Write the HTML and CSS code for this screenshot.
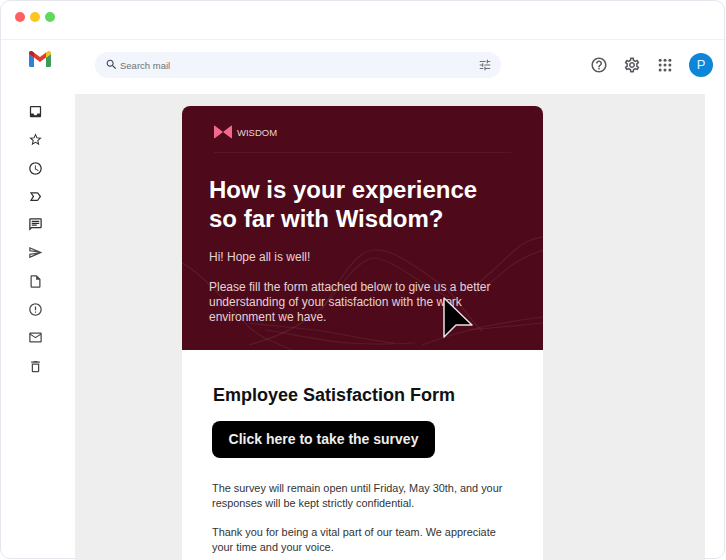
FILE: index.html
```html
<!DOCTYPE html>
<html lang="en">

<head>
    <meta charset="UTF-8">
    <meta name="viewport" content="width=device-width, initial-scale=1.0">
    <title>Wisdom survey email</title>
    <link rel="stylesheet" href="styles.css">
</head>

<body>
    <div class="window">
        <div class="titlebar">
            <span class="dot dot-red"></span>
            <span class="dot dot-yellow"></span>
            <span class="dot dot-green"></span>
        </div>

        <div class="app">
            <!-- Left rail -->
            <aside class="sidebar">
                <svg class="gmail-logo" viewBox="0 0 22 16" width="22" height="16">
                    <path d="M0 3v11.5A1.5 1.5 0 0 0 1.5 16H5V6.5z" fill="#2f80d8"/>
                    <path d="M22 3v11.5a1.5 1.5 0 0 1-1.5 1.5H17V6.5z" fill="#3f9a58"/>
                    <path d="M17 1.5V6.5L22 3V2.2C22 .4 20 -.6 18.6.4z" fill="#f5bd1f"/>
                    <path d="M0 3 5 6.5 11 11 17 6.5V1.5L11 6 3.4.4C2 -.6 0 .4 0 2.2z" fill="#e5382f"/>
                    <path d="M0 3 5 6.5V1.5L3.4.4C2 -.6 0 .4 0 2.2z" fill="#b3262c"/>
                </svg>
                <nav class="rail">
                    <svg class="rail-icon" viewBox="0 0 24 24"><path d="M19 3H4.99c-1.11 0-1.98.89-1.98 2L3 19c0 1.1.88 2 1.99 2H19c1.1 0 2-.9 2-2V5c0-1.11-.9-2-2-2zm0 12h-4c0 1.66-1.35 3-3 3s-3-1.34-3-3H4.99V5H19v10z"/></svg>
                    <svg class="rail-icon" viewBox="0 0 24 24"><path d="M22 9.24l-7.19-.62L12 2 9.19 8.63 2 9.24l5.46 4.73L5.82 21 12 17.27 18.18 21l-1.63-7.03L22 9.24zM12 15.4l-3.76 2.27 1-4.28-3.32-2.88 4.38-.38L12 6.1l1.71 4.04 4.38.38-3.32 2.88 1 4.28L12 15.4z"/></svg>
                    <svg class="rail-icon" viewBox="0 0 24 24"><path d="M11.99 2C6.47 2 2 6.48 2 12s4.47 10 9.99 10C17.52 22 22 17.52 22 12S17.52 2 11.99 2zM12 20c-4.42 0-8-3.58-8-8s3.58-8 8-8 8 3.58 8 8-3.58 8-8 8zm.5-13H11v6l5.25 3.15.75-1.23-4.5-2.67z"/></svg>
                    <svg class="rail-icon" viewBox="0 0 24 24"><path d="M15 19H3l4.5-7L3 5h12c.65 0 1.26.31 1.63.84L21 12l-4.37 6.16c-.37.52-.98.84-1.63.84zm-8.5-2H15l3.5-5L15 7H6.5l3.5 5-3.5 5z"/></svg>
                    <svg class="rail-icon" viewBox="0 0 24 24"><path d="M20 2H4c-1.1 0-2 .9-2 2v18l4-4h14c1.1 0 2-.9 2-2V4c0-1.1-.9-2-2-2zm0 14H5.17L4 17.17V4h16v12zM6 12h8v2H6zm0-3h12v2H6zm0-3h12v2H6z"/></svg>
                    <svg class="rail-icon" viewBox="0 0 24 24"><path d="M4.01 6.03l7.51 3.22-7.52-1 .01-2.22m7.5 8.72L4 17.97v-2.22l7.51-1M2.01 3L2 10l15 2-15 2 .01 7L23 12 2.01 3z"/></svg>
                    <svg class="rail-icon" viewBox="0 0 24 24"><path d="M14 2H6c-1.1 0-1.99.9-1.99 2L4 20c0 1.1.89 2 1.99 2H18c1.1 0 2-.9 2-2V8l-6-6zM6 20V4h7v5h5v11H6z"/></svg>
                    <svg class="rail-icon" viewBox="0 0 24 24"><path d="M11 15h2v2h-2zm0-8h2v6h-2zm.99-5C6.47 2 2 6.48 2 12s4.47 10 9.99 10C17.52 22 22 17.52 22 12S17.52 2 11.99 2zM12 20c-4.42 0-8-3.58-8-8s3.58-8 8-8 8 3.58 8 8-3.58 8-8 8z"/></svg>
                    <svg class="rail-icon" viewBox="0 0 24 24"><path d="M22 6c0-1.1-.9-2-2-2H4c-1.1 0-2 .9-2 2v12c0 1.1.9 2 2 2h16c1.1 0 2-.9 2-2V6zm-2 0l-8 5-8-5h16zm0 12H4V8l8 5 8-5v10z"/></svg>
                    <svg class="rail-icon" viewBox="0 0 24 24"><path d="M16 9v10H8V9h8m-1.5-6h-5l-1 1H5v2h14V4h-3.5l-1-1zM18 7H6v12c0 1.1.9 2 2 2h8c1.1 0 2-.9 2-2V7z"/></svg>
                </nav>
            </aside>

            <div class="content">
                <!-- Search and account row -->
                <header class="topbar">
                    <div class="search">
                        <svg class="search-icon" viewBox="0 0 24 24"><path d="M15.5 14h-.79l-.28-.27C15.41 12.59 16 11.11 16 9.5 16 5.91 13.09 3 9.5 3S3 5.91 3 9.5 5.91 16 9.5 16c1.61 0 3.09-.59 4.23-1.57l.27.28v.79l5 4.99L20.49 19l-4.99-5zm-6 0C7.01 14 5 11.99 5 9.5S7.01 5 9.5 5 14 7.01 14 9.5 11.99 14 9.5 14z"/></svg>
                        <span class="search-text">Search mail</span>
                        <svg class="tune-icon" viewBox="0 0 24 24"><path d="M3 17v2h6v-2H3zM3 5v2h10V5H3zm10 16v-2h8v-2h-8v-2h-2v6h2zM7 9v2H3v2h4v2h2V9H7zm14 4v-2H11v2h10zm-6-4h2V7h4V5h-4V3h-2v6z"/></svg>
                    </div>
                    <div class="top-actions">
                        <svg class="top-icon" viewBox="0 0 24 24"><path d="M11 18h2v-2h-2v2zm1-16C6.48 2 2 6.48 2 12s4.48 10 10 10 10-4.48 10-10S17.52 2 12 2zm0 18c-4.41 0-8-3.59-8-8s3.59-8 8-8 8 3.59 8 8-3.59 8-8 8zm0-14c-2.21 0-4 1.79-4 4h2c0-1.1.9-2 2-2s2 .9 2 2c0 2-3 1.75-3 5h2c0-2.25 3-2.5 3-5 0-2.21-1.79-4-4-4z"/></svg>
                        <svg class="top-icon" viewBox="0 0 24 24"><path d="M19.43 12.98c.04-.32.07-.64.07-.98 0-.34-.03-.66-.07-.98l2.11-1.65c.19-.15.24-.42.12-.64l-2-3.46c-.09-.16-.26-.25-.44-.25-.06 0-.12.01-.17.03l-2.49 1c-.52-.4-1.08-.73-1.69-.98l-.38-2.65C14.46 2.18 14.25 2 14 2h-4c-.25 0-.46.18-.49.42l-.38 2.65c-.61.25-1.17.59-1.69.98l-2.49-1c-.06-.02-.12-.03-.18-.03-.17 0-.34.09-.43.25l-2 3.46c-.13.22-.07.49.12.64l2.11 1.65c-.04.32-.07.65-.07.98 0 .33.03.66.07.98l-2.11 1.65c-.19.15-.24.42-.12.64l2 3.46c.09.16.26.25.44.25.06 0 .12-.01.17-.03l2.49-1c.52.4 1.08.73 1.69.98l.38 2.65c.03.24.24.42.49.42h4c.25 0 .46-.18.49-.42l.38-2.65c.61-.25 1.17-.59 1.69-.98l2.49 1c.06.02.12.03.18.03.17 0 .34-.09.43-.25l2-3.46c.12-.22.07-.49-.12-.64l-2.11-1.65zm-1.98-1.71c.04.31.05.52.05.73 0 .21-.02.43-.05.73l-.14 1.13.89.7 1.08.84-.7 1.21-1.27-.51-1.04-.42-.9.68c-.43.32-.84.56-1.25.73l-1.06.43-.16 1.13-.2 1.35h-1.4l-.19-1.35-.16-1.13-1.06-.43c-.43-.18-.83-.41-1.23-.71l-.91-.7-1.06.43-1.27.51-.7-1.21 1.08-.84.89-.7-.14-1.13c-.03-.31-.05-.54-.05-.74s.02-.43.05-.73l.14-1.13-.89-.7-1.08-.84.7-1.21 1.27.51 1.04.42.9-.68c.43-.32.84-.56 1.25-.73l1.06-.43.16-1.13.2-1.35h1.39l.19 1.35.16 1.13 1.06.43c.43.18.83.41 1.23.71l.91.7 1.06-.43 1.27-.51.7 1.21-1.07.85-.89.7.14 1.13zM12 8c-2.21 0-4 1.79-4 4s1.79 4 4 4 4-1.79 4-4-1.79-4-4-4zm0 6c-1.1 0-2-.9-2-2s.9-2 2-2 2 .9 2 2-.9 2-2 2z"/></svg>
                        <svg class="top-icon" viewBox="0 0 24 24">
                            <circle cx="5.5" cy="5.5" r="2"/><circle cx="12" cy="5.5" r="2"/><circle cx="18.5" cy="5.5" r="2"/>
                            <circle cx="5.5" cy="12" r="2"/><circle cx="12" cy="12" r="2"/><circle cx="18.5" cy="12" r="2"/>
                            <circle cx="5.5" cy="18.5" r="2"/><circle cx="12" cy="18.5" r="2"/><circle cx="18.5" cy="18.5" r="2"/>
                        </svg>
                        <div class="avatar">P</div>
                    </div>
                </header>

                <!-- Email body -->
                <main class="mail-pane">
                    <article class="mail">
                        <section class="hero">
                            <svg class="hero-waves" viewBox="0 0 361 244" width="361" height="244" fill="none">
                                <path d="M140 204C160 170 175 144 192 144 210 143 230 158 253 174S280 205 300 225"/>
                                <path d="M67 239C100 230 130 215 150 191 165 170 180 152 192 152 215 155 240 180 267 191"/>
                                <path d="M287 184C305 172 320 155 333 144S352 133 361 131"/>
                                <path d="M293 187C310 178 320 165 333 157S352 147 361 144"/>
                                <path d="M0 157C15 165 25 176 33 184S55 210 67 221 90 235 110 244"/>
                                <path d="M67 217C90 220 110 221 133 224S190 235 213 237"/>
                                <path d="M83 224C110 228 140 235 167 237S215 238 233 237"/>
                                <path d="M240 239C260 232 280 225 300 221S345 213 361 211"/>
                                <path d="M287 224C310 222 340 219 361 217"/>
                            </svg>
                            <div class="brand">
                                <svg class="brand-mark" viewBox="0 0 18 14" width="18" height="14">
                                    <path d="M.6.6C.2.5 0 .8 0 1.2v11.6c0 .4.3.7.7.5L8.4 7.6c.4-.3.4-.8 0-1.1z"/>
                                    <path d="M17.4.6c.4-.1.6.2.6.6v11.6c0 .4-.3.7-.7.5L9.6 7.6c-.4-.3-.4-.8 0-1.1z"/>
                                </svg>
                                <span class="brand-name">WISDOM</span>
                            </div>
                            <h1 class="hero-title">How is your experience so far with Wisdom?</h1>
                            <p class="hero-text">Hi! Hope all is well!</p>
                            <p class="hero-text">Please fill the form attached below to give us a better understanding of your satisfaction with the work environment we have.</p>
                        </section>
                        <section class="form-block">
                            <h2 class="form-title">Employee Satisfaction Form</h2>
                            <a class="survey-btn" href="#">Click here to take the survey</a>
                            <p class="form-text">The survey will remain open until Friday, May 30th, and your responses will be kept strictly confidential.</p>
                            <p class="form-text">Thank you for being a vital part of our team. We appreciate your time and your voice.</p>
                        </section>
                    </article>
                </main>
            </div>
        </div>

        <!-- Mouse pointer over the email -->
        <svg class="pointer" viewBox="0 0 32 44" width="32" height="44">
            <path d="M2 2 30 29 14 29 2 41z"/>
        </svg>
    </div>
</body>

</html>
```

FILE: styles.css
```css
* {
    box-sizing: border-box;
}

html,
body {
    margin: 0;
    padding: 0;
    height: 560px;
    overflow: hidden;
    background: #fff;
}

body {
    font-family: 'Liberation Sans', Arial, sans-serif;
    color: #111;
}

.window {
    position: relative;
    width: 725px;
    height: 559px;
    background: #fff;
    border: 1px solid #e6e6ee;
    border-radius: 10px;
    display: flex;
    flex-direction: column;
}

/* Title bar */
.titlebar {
    height: 39px;
    flex: none;
    display: flex;
    align-items: center;
    gap: 5px;
    padding: 0 0 6px 14px;
    border-bottom: 1px solid #f1f1f4;
}

.dot {
    width: 10px;
    height: 10px;
    border-radius: 50%;
}

.dot-red {
    background: #ff5f62;
}

.dot-yellow {
    background: #fdc51f;
}

.dot-green {
    background: #5fd85c;
}

.app {
    flex: 1;
    display: flex;
    min-height: 0;
    margin-bottom: -2px;
}

/* Left rail */
.sidebar {
    width: 74px;
    flex: none;
    display: flex;
    flex-direction: column;
    align-items: center;
    padding-top: 11px;
}

.gmail-logo {
    margin: 0 0 0 3px;
}

.rail {
    margin-top: 37px;
    display: flex;
    flex-direction: column;
    align-items: center;
    gap: 13.3px;
    margin-left: -6px;
}

.rail-icon {
    width: 15px;
    height: 15px;
    fill: #2f2f33;
}

.rail-icon:nth-child(n+6) {
    fill: #48484c;
}

.content {
    flex: 1;
    min-width: 0;
    display: flex;
    flex-direction: column;
}

/* Search row */
.topbar {
    height: 54px;
    flex: none;
    display: flex;
    align-items: center;
    padding: 0 11px 5px 20px;
}

.search {
    width: 406px;
    height: 26px;
    background: #f2f5fb;
    border-radius: 13px;
    display: flex;
    align-items: center;
    padding: 0 9px 0 10px;
}

.search-icon {
    width: 13px;
    height: 13px;
    fill: #3c4350;
}

.search-text {
    margin-left: 2px;
    padding-top: 1px;
    font-size: 9.5px;
    color: #6f7276;
    flex: 1;
}

.tune-icon {
    width: 14px;
    height: 14px;
    fill: #6a6d72;
}

.top-actions {
    margin-left: auto;
    display: flex;
    align-items: center;
}

.top-icon {
    width: 18px;
    height: 18px;
    margin-right: 15px;
    fill: #55585c;
}

.avatar {
    width: 24px;
    height: 24px;
    border-radius: 50%;
    background: #0b86d8;
    color: #e8f4fc;
    font-size: 13px;
    display: flex;
    align-items: center;
    justify-content: center;
}

/* Email */
.mail-pane {
    flex: 1;
    min-height: 0;
    width: 630px;
    background: #eeeeee;
    padding: 12px 0 0 107px;
    overflow: hidden;
}

.mail {
    width: 361px;
    height: 100%;
    background: #fff;
    border-radius: 8px 8px 0 0;
    overflow: hidden;
}

.hero {
    position: relative;
    height: 244px;
    background: #4e0a1a;
    padding: 19px 27px 0;
    color: #fff;
}

.hero-waves {
    position: absolute;
    left: 0;
    top: 0;
}

.hero-waves path {
    stroke: rgba(255, 255, 255, 0.07);
    stroke-width: 1.2;
}

.brand {
    position: relative;
    display: flex;
    align-items: center;
    gap: 5px;
    margin-left: 5px;
    padding-bottom: 13px;
    width: 297px;
    border-bottom: 1px solid #5a1626;
}

.brand-mark {
    fill: #f4688d;
}

.brand-name {
    font-size: 9.5px;
    color: #e6d5d9;
}

.hero-title {
    position: relative;
    max-width: 290px;
    margin: 22px 0 17px;
    font-size: 24px;
    line-height: 29px;
    font-weight: 700;
    color: #fff;
}

.hero-text {
    position: relative;
    margin: 15px 0 0;
    font-size: 12px;
    line-height: 15px;
    color: #e3d3d7;
}

.form-block {
    padding: 34px 30px 0;
}

.form-title {
    margin: 0 0 0 1px;
    font-size: 18px;
    line-height: 22px;
    font-weight: 700;
    color: #111;
}

.survey-btn {
    display: inline-block;
    margin: 15px 0 0;
    width: 223px;
    height: 37px;
    line-height: 37px;
    text-align: center;
    background: #000;
    border-radius: 8px;
    color: #eee;
    font-size: 14px;
    font-weight: 700;
    text-decoration: none;
}

.form-text {
    margin: 23px 0 0;
    font-size: 10.9px;
    line-height: 15px;
    color: #333;
}

.form-text + .form-text {
    margin-top: 14px;
}

/* Pointer lies over the hero */
.pointer {
    position: absolute;
    left: 441px;
    top: 295px;
}

.pointer path {
    fill: #000;
    stroke: #e8dfe2;
    stroke-width: 1.5;
    stroke-linejoin: round;
}
```
